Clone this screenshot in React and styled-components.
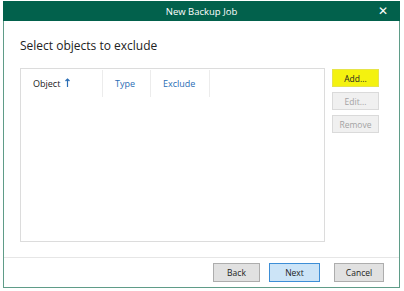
import React from 'react'
import styled, { createGlobalStyle } from 'styled-components'

const GlobalStyle = createGlobalStyle`
  html, body {
    margin: 0;
    padding: 0;
    background: #ffffff;
  }
  body {
    font-family: "Open Sans", "Noto Sans", sans-serif;
  }
`

const Page = styled.div`
  width: 404px;
  height: 291px;
  padding: 1px 4px 3px 3px;
  box-sizing: border-box;
`

const Window = styled.div`
  height: 100%;
  display: flex;
  flex-direction: column;
  border: 1px solid #5f9c88;
  border-top: none;
  box-sizing: border-box;
  background: #fff;
`

const TitleBar = styled.div`
  height: 20px;
  flex-shrink: 0;
  background: #02614c;
  color: #fff;
  font-size: 9.5px;
  display: flex;
  align-items: center;
  justify-content: center;
  position: relative;
  margin: 0 -1px;
`

const Close = styled.span`
  position: absolute;
  right: 12px;
  top: 3px;
  font-size: 12px;
  font-weight: 700;
  font-family: "DejaVu Sans", sans-serif;
`

const Body = styled.div`
  flex: 1;
  padding: 17px 20px 0 16px;
  display: flex;
  flex-direction: column;
`

const Heading = styled.div`
  font-size: 12px;
  line-height: 16px;
  color: #222;
  margin-bottom: 14px;
`

const Row = styled.div`
  display: flex;
  gap: 7px;
`

const ListBox = styled.div`
  width: 305px;
  height: 174px;
  border: 1px solid #dcdcdc;
  box-sizing: border-box;
`

const HeaderRow = styled.div`
  display: flex;
  height: 27px;
  margin-top: 1px;
`

const Col = styled.div`
  width: ${p => p.$w}px;
  box-sizing: border-box;
  border-right: 1px solid #ececec;
  padding-left: ${p => p.$pl}px;
  display: flex;
  align-items: center;
  font-size: 9px;
  color: ${p => (p.$blue ? '#2a6db5' : '#222')};
`

const SortArrow = styled.svg`
  margin-left: 5px;
  margin-top: -2px;
`

const SideButtons = styled.div`
  display: flex;
  flex-direction: column;
  gap: 5px;
  padding-top: 1px;
`

const Button = styled.button`
  width: ${p => p.$w || 47}px;
  height: ${p => p.$h || 18}px;
  margin-left: ${p => p.$ml || 0}px;
  padding: 0;
  font-family: "Open Sans", "Noto Sans", sans-serif;
  font-size: 8.5px;
  box-sizing: border-box;
  border: 1px solid ${p => p.$border || '#adadad'};
  background: ${p => p.$bg || '#e1e1e1'};
  color: ${p => p.$color || '#222'};
`

const Footer = styled.div`
  height: 29px;
  flex-shrink: 0;
  border-top: 1px solid #e6e6e6;
  display: flex;
  align-items: center;
  justify-content: flex-end;
  padding-right: 15px;
  gap: 9px;
`

export default function App() {
  return (
    <>
      <GlobalStyle />
      <Page>
        <Window>
          <TitleBar>
            New Backup Job
            <Close>✕</Close>
          </TitleBar>
          <Body>
            <Heading>Select objects to exclude</Heading>
            <Row>
              <ListBox>
                <HeaderRow>
                  <Col $w={82} $pl={12}>
                    Object
                    <SortArrow width="5" height="9" viewBox="0 0 5 9">
                      <path d="M2.5 1 L2.5 9 M0.5 3 L2.5 1 L4.5 3" stroke="#2a6db5" strokeWidth="1.2" fill="none" />
                    </SortArrow>
                  </Col>
                  <Col $w={48} $pl={12} $blue>Type</Col>
                  <Col $w={59} $pl={12} $blue>Exclude</Col>
                </HeaderRow>
              </ListBox>
              <SideButtons>
                <Button $bg="#f4f20f" $border="#e6e44a">Add...</Button>
                <Button $bg="#f0f0f0" $border="#dadada" $color="#a3a3a3">Edit...</Button>
                <Button $bg="#f0f0f0" $border="#dadada" $color="#a3a3a3">Remove</Button>
              </SideButtons>
            </Row>
          </Body>
          <Footer>
            <Button $h={19}>Back</Button>
            <Button $w={51} $h={19} $bg="#cce4f7" $border="#3d8ed6">Next</Button>
            <Button $w={50} $h={19} $ml={5}>Cancel</Button>
          </Footer>
        </Window>
      </Page>
    </>
  )
}
